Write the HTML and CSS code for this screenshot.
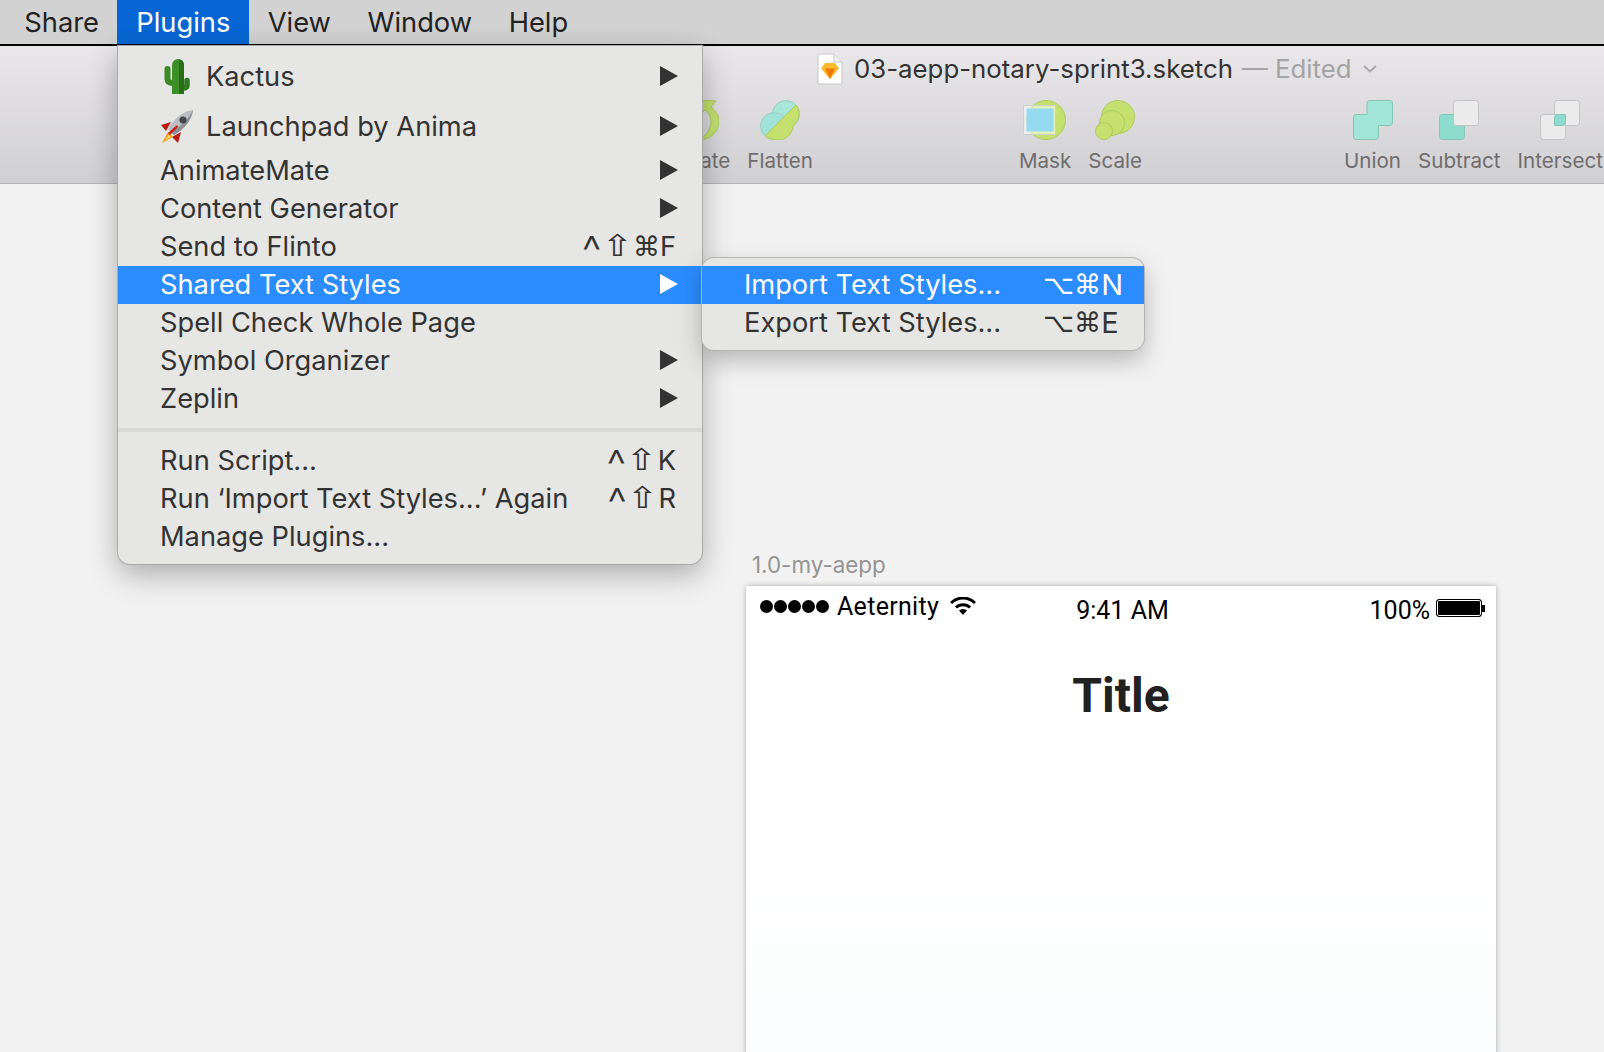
FILE: index.html
```html
<!doctype html>
<html lang="en">
<head>
    <meta charset="UTF-8">
    <title>03-aepp-notary-sprint3.sketch</title>
    <link rel="stylesheet" href="styles.css">
</head>
<body>
    <nav class="menubar">
        <span class="menubar-item">Share</span>
        <span class="menubar-item menubar-item-open">Plugins</span>
        <span class="menubar-item">View</span>
        <span class="menubar-item">Window</span>
        <span class="menubar-item">Help</span>
    </nav>

    <header class="toolbar">
        <div class="doc-title">
            <svg class="doc-icon" width="26" height="32" viewBox="0 0 26 32">
                <path d="M1 1H17L25 9V31H1Z" fill="#fff" stroke="#c8c8c8"/>
                <path d="M17 1V9H25" fill="#eee" stroke="#c8c8c8"/>
                <path d="M8 10H18L22 15.5L13 26L4 15.5Z" fill="#fdb92c"/>
                <path d="M8 15.5H18L13 26Z" fill="#f27a00"/>
            </svg>
            <span class="doc-name">03-aepp-notary-sprint3.sketch</span>
            <span class="doc-status">— Edited</span>
            <svg class="doc-chevron" width="14" height="8" viewBox="0 0 14 8"><path d="M1 1L7 6.5L13 1" fill="none" stroke="#a8a8a8" stroke-width="1.8"/></svg>
        </div>
        <div class="tools">
            <div class="tool">
                <svg width="40" height="40" viewBox="0 0 40 40">
                    <path d="M22 0L37 1L32 7C38 12 40 17 40 21C40 32 31 40 20 40C27 36 32 29 32 21C32 16 29 12 26 10L22 14Z" fill="#c5e06f" stroke="#aecb62"/>
                </svg>
                <span>Rotate</span>
            </div>
            <div class="tool">
                <svg width="40" height="40" viewBox="0 0 40 40">
                    <circle cx="26" cy="14" r="13.5" fill="#a9e6da" stroke="#9cccc0"/>
                    <circle cx="14" cy="26" r="13.5" fill="#a0e2d8" stroke="#9cccc0"/>
                    <path d="M5 36L36 5C41 11 40 20 33 26C33 32 28 39 20 40C14 40 9 39 5 36Z" fill="#c5e06f" stroke="#aecb62"/>
                </svg>
                <span>Flatten</span>
            </div>
            <div class="tool tool-mask">
                <svg width="44" height="40" viewBox="0 0 44 40">
                    <circle cx="23" cy="20" r="19.5" fill="#c5e06f" stroke="#aecb62"/>
                    <rect x="0.5" y="5.5" width="32" height="29" fill="#fff" fill-opacity=".5" stroke="#cfcfcf"/>
                    <rect x="3.5" y="8.5" width="27" height="23" fill="#96daf2"/>
                </svg>
                <span>Mask</span>
            </div>
            <div class="tool">
                <svg width="40" height="40" viewBox="0 0 40 40">
                    <circle cx="23" cy="17" r="16.5" fill="#c5e06f" stroke="#aecb62"/>
                    <circle cx="17" cy="23" r="12.5" fill="#c5e06f" stroke="#aecb62"/>
                    <circle cx="9" cy="31" r="8.5" fill="#c5e06f" stroke="#aecb62"/>
                </svg>
                <span>Scale</span>
            </div>
            <div class="tool tool-union">
                <svg width="40" height="40" viewBox="0 0 40 40">
                    <path d="M14 3A3 3 0 0 1 17 .5H37A2.5 2.5 0 0 1 39.5 3V23A3 3 0 0 1 37 25.5H25.5V37A3 3 0 0 1 23 39.5H3A2.5 2.5 0 0 1 .5 37V17A3 3 0 0 1 3 14.5H14Z" fill="#a2e6d9" stroke="#88c4b8"/>
                </svg>
                <span>Union</span>
            </div>
            <div class="tool">
                <svg width="40" height="40" viewBox="0 0 40 40">
                    <rect x=".5" y="14.5" width="25" height="25" rx="3" fill="#8ddccd" stroke="#88c4b8"/>
                    <rect x="14.5" y=".5" width="25" height="25" rx="3" fill="#ebebeb" stroke="#c4c4c4"/>
                </svg>
                <span>Subtract</span>
            </div>
            <div class="tool">
                <svg width="40" height="40" viewBox="0 0 40 40">
                    <rect x="14.5" y=".5" width="25" height="25" rx="3" fill="#ebebeb" stroke="#c4c4c4"/>
                    <rect x=".5" y="14.5" width="25" height="25" rx="3" fill="#ebebeb" stroke="#c4c4c4"/>
                    <path d="M14.5 17.5A3 3 0 0 1 17.5 14.5H25.5V22.5A3 3 0 0 1 22.5 25.5H14.5Z" fill="#8ddccd" stroke="#88c4b8"/>
                </svg>
                <span>Intersect</span>
            </div>
        </div>
    </header>

    <main class="canvas">
        <div class="artboard-label">1.0-my-aepp</div>
        <section class="artboard">
            <div class="status-bar">
                <div class="carrier">
                    <span class="signal"><i></i><i></i><i></i><i></i><i></i></span>
                    <span class="carrier-name">Aeternity</span>
                    <svg width="26" height="18" viewBox="0 0 26 18">
                        <path d="M1 6A17 17 0 0 1 25 6" fill="none" stroke="#000" stroke-width="3"/>
                        <path d="M6 10.5A10 10 0 0 1 20 10.5" fill="none" stroke="#000" stroke-width="3"/>
                        <path d="M9 13.5A6 6 0 0 1 17 13.5L13 18Z" fill="#000"/>
                    </svg>
                </div>
                <div class="clock">9:41 AM</div>
                <div class="battery">
                    <span>100%</span>
                    <span class="battery-body"></span>
                    <span class="battery-tip"></span>
                </div>
            </div>
            <h1 class="artboard-title">Title</h1>
        </section>
    </main>

    <div class="menu">
        <div class="menu-row menu-row-tall">
            <span class="menu-icon">
                <svg width="34" height="36" viewBox="0 0 34 36">
                    <path d="M7.5 10V20Q7.5 24 13 24" fill="none" stroke="#3c8a26" stroke-width="6" stroke-linecap="round"/>
                    <path d="M27 21.5V26Q27 29 23 29" fill="none" stroke="#2f7a1e" stroke-width="5.5" stroke-linecap="round"/>
                    <path d="M12 6A6 6 0 0 1 24 6V35H12Z" fill="#3d8f28"/>
                    <path d="M19 0.2A6 6 0 0 1 24 6V35H19Z" fill="#2a6e1a"/>
                </svg>
            </span>
            <span class="menu-label">Kactus</span>
            <span class="menu-arrow"></span>
        </div>
        <div class="menu-row menu-row-tall">
            <span class="menu-icon">
                <svg width="34" height="34" viewBox="0 0 34 34">
                    <path d="M11 12L1 15L6 21Z" fill="#b81c10"/>
                    <path d="M21 22L18 33L12 27Z" fill="#b81c10"/>
                    <path d="M8 22L2 33L13 27Z" fill="#f59a16"/>
                    <path d="M9 25L5 30L11 27Z" fill="#fde26a"/>
                    <path d="M33 0C24 1 14 8 8 19L14 25C25 19 32 9 33 0Z" fill="#bdbdc4"/>
                    <path d="M33 0C32 9 25 19 14 25L11 22C20 17 29 9 33 0Z" fill="#8f8f98"/>
                    <path d="M8 23L17 15L18 17L10 25Z" fill="#c91e12"/>
                    <circle cx="23" cy="10" r="3.6" fill="#45454c"/>
                </svg>
            </span>
            <span class="menu-label">Launchpad by Anima</span>
            <span class="menu-arrow"></span>
        </div>
        <div class="menu-row"><span class="menu-label">AnimateMate</span><span class="menu-arrow"></span></div>
        <div class="menu-row"><span class="menu-label">Content Generator</span><span class="menu-arrow"></span></div>
        <div class="menu-row"><span class="menu-label">Send to Flinto</span><span class="menu-keys"><span class="key-ctrl">^</span><span class="key-shift">⇧</span><span class="key-mod">⌘</span>F</span></div>
        <div class="menu-row menu-row-active">
            <span class="menu-label">Shared Text Styles</span><span class="menu-arrow"></span>
            <div class="submenu">
                <div class="submenu-row menu-row-active"><span class="menu-label">Import Text Styles...</span><span class="submenu-keys"><span class="key-mod">⌥⌘</span>N</span></div>
                <div class="submenu-row"><span class="menu-label">Export Text Styles...</span><span class="submenu-keys"><span class="key-mod">⌥⌘</span>E</span></div>
            </div>
        </div>
        <div class="menu-row"><span class="menu-label">Spell Check Whole Page</span></div>
        <div class="menu-row"><span class="menu-label">Symbol Organizer</span><span class="menu-arrow"></span></div>
        <div class="menu-row"><span class="menu-label">Zeplin</span><span class="menu-arrow"></span></div>
        <div class="menu-separator"></div>
        <div class="menu-row"><span class="menu-label">Run Script...</span><span class="menu-keys"><span class="key-ctrl">^</span><span class="key-shift">⇧</span>K</span></div>
        <div class="menu-row"><span class="menu-label">Run ‘Import Text Styles...’ Again</span><span class="menu-keys"><span class="key-ctrl">^</span><span class="key-shift">⇧</span>R</span></div>
        <div class="menu-row"><span class="menu-label">Manage Plugins...</span></div>
    </div>
</body>
</html>
```

FILE: styles.css
```css
html, body {
    height: 100%;
}

body {
    margin: 0;
    height: 1052px;
    overflow: hidden;
    display: flex;
    flex-direction: column;
    background-color: #f2f2f2;
    font-family: 'Inter', 'Liberation Sans', sans-serif;
    color: #333;
}

/* top bar */
.menubar {
    display: flex;
    flex-shrink: 0;
    height: 44px;
    padding-left: 6px;
    background-color: #d2d2d2;
    border-bottom: 2px solid #000;
    font-size: 27.3px;
    color: #222;
}

.menubar-item {
    display: flex;
    align-items: center;
    padding: 0 18.3px;
}

.menubar-item-open {
    height: 44px;
    padding: 0 19px;
    background-color: #0766d4;
    color: #fff;
}

/* toolbar */
.toolbar {
    flex-shrink: 0;
    height: 138px;
    box-sizing: border-box;
    padding-left: 668px;
    background: linear-gradient(#e9e7ea, #d0cfd1);
    border-bottom: 1px solid #b4b4b4;
}

.doc-title {
    display: flex;
    align-items: center;
    height: 46px;
    margin-left: 149px;
    white-space: nowrap;
    font-size: 25.8px;
}

.doc-icon {
    margin-right: 11px;
}

.doc-name,
.doc-status {
    padding-bottom: 2px;
}

.doc-status {
    margin-left: 9px;
    color: #a4a4a4;
}

.doc-chevron {
    margin-left: 11px;
}

.tools {
    display: flex;
    gap: 17px;
    margin-top: 8px;
    white-space: nowrap;
}

.tool {
    display: flex;
    flex-direction: column;
    align-items: center;
    gap: 8px;
    font-size: 20.6px;
    color: #706d6e;
}

.tool-mask {
    margin-left: 189px;
}

.tool-union {
    margin-left: 185px;
}

/* artboard */
.canvas {
    flex: 1;
    padding: 0 0 0 746px;
}

.artboard-label {
    height: 24px;
    margin: 369px 0 9px 6px;
    line-height: 24px;
    font-size: 22.4px;
    color: #949494;
}

.artboard {
    width: 750px;
    height: 480px;
    background: linear-gradient(#fff 50%, #fbfcfd);
    box-shadow: 0 0 5px rgba(0, 0, 0, 0.3);
}

.status-bar {
    display: grid;
    grid-template-columns: 1fr auto 1fr;
    align-items: center;
    height: 48px;
    padding: 0 11px 0 14px;
    font-family: 'Roboto', sans-serif;
    font-size: 25px;
    color: #000;
}

.carrier {
    display: flex;
    align-items: center;
    gap: 8px;
    margin-top: -8px;
}

.carrier-name {
    letter-spacing: 0.3px;
}

.carrier svg {
    margin-left: 3px;
}

.signal {
    display: flex;
    gap: 1px;
}

.signal i {
    width: 13px;
    height: 13px;
    border-radius: 50%;
    background-color: #000;
}

.battery {
    display: flex;
    align-items: center;
    justify-content: flex-end;
}

.battery-body {
    width: 44px;
    height: 16px;
    margin: -4px 0 0 6px;
    background-color: #000;
    border: 1px solid #000;
    border-radius: 3px;
    box-shadow: inset 0 0 0 1px #fff;
}

.battery-tip {
    width: 3px;
    height: 7px;
    margin-top: -4px;
    background-color: #000;
}

.artboard-title {
    margin: 34px 0 0;
    text-align: center;
    font-family: 'Roboto', sans-serif;
    font-size: 48px;
    line-height: 56px;
    font-weight: 700;
    color: #212121;
}

/* plugins menu */
.menu {
    position: absolute;
    top: 46px;
    left: 118px;
    width: 584px;
    height: 518px;
    box-sizing: border-box;
    padding-top: 6px;
    background-color: #e6e6e4;
    border-radius: 0 0 12px 12px;
    box-shadow: 0 0 0 1px #aaa, 0 10px 30px rgba(0, 0, 0, 0.3);
    font-size: 27.25px;
}

.menu-row {
    position: relative;
    display: flex;
    align-items: center;
    height: 38px;
    padding: 0 24px 0 42px;
    white-space: nowrap;
}

.menu-row-tall {
    height: 50px;
}

.menu-row-active {
    background-color: #2b8cff;
    color: #fff;
}

.menu-icon {
    display: flex;
    width: 34px;
    margin-right: 12px;
}

.menu-label {
    flex: 1;
    padding-bottom: 2px;
}

.menu-arrow {
    width: 0;
    height: 0;
    margin-bottom: 2px;
    border-left: 18px solid #333;
    border-top: 10px solid transparent;
    border-bottom: 10px solid transparent;
}

.menu-row-active > .menu-arrow {
    border-left-color: #fff;
}

.menu-keys,
.submenu-keys {
    display: flex;
    align-items: center;
    height: 36px;
    margin-bottom: 2px;
}

.menu-keys {
    margin-right: 2px;
}

.key-mod,
.key-shift {
    font-family: 'DejaVu Sans', sans-serif;
    line-height: 1;
}

.key-mod {
    font-size: 27px;
}

.key-ctrl {
    margin-top: 10px;
    font-size: 44px;
    font-weight: 300;
    line-height: 0.6;
}

.key-shift {
    margin: 0 3.2px;
    font-size: 30px;
    transform: scaleX(1.25);
}

.menu-separator {
    height: 4px;
    margin: 10px 0;
    background-color: #d8d8d6;
}

.submenu {
    position: absolute;
    top: -8px;
    left: 584px;
    width: 442px;
    height: 92px;
    box-sizing: border-box;
    padding: 8px 0;
    background-color: #e6e6e4;
    color: #333;
    border-radius: 12px;
    box-shadow: 0 0 0 1px #b4b4b4, 0 10px 24px rgba(0, 0, 0, 0.25);
}

.submenu-row {
    display: flex;
    align-items: center;
    height: 38px;
    padding-left: 42px;
}

.submenu-keys {
    width: 101px;
    font-size: 29px;
}
```
